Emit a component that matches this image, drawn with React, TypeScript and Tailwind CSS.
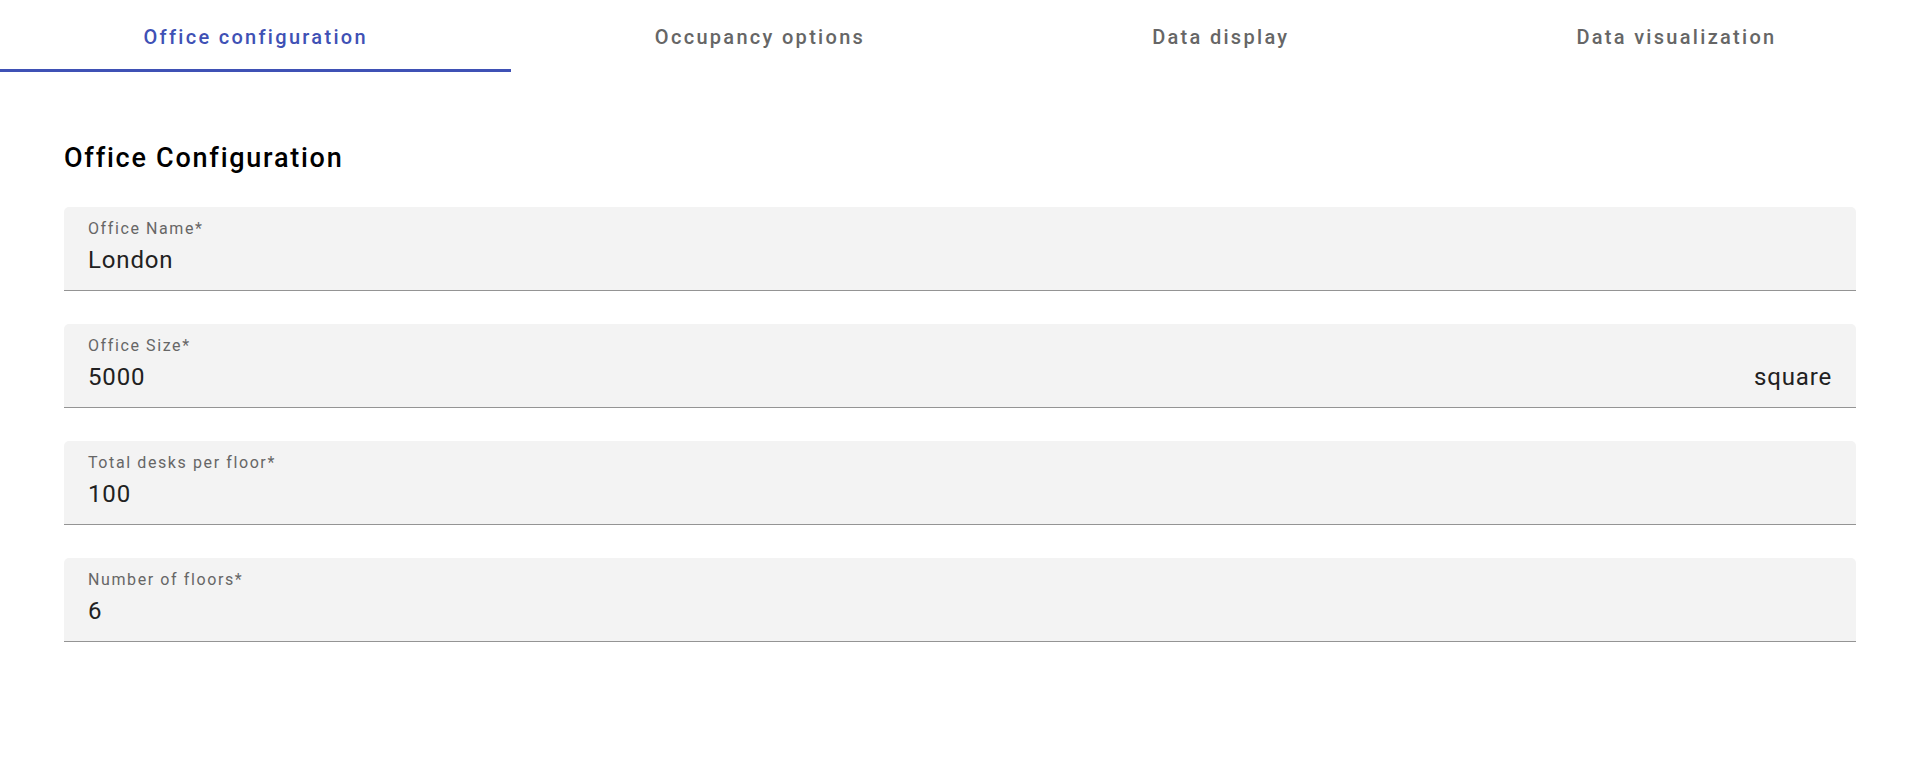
import React from "react";

// --- Data ---
const TABS = ["Office configuration", "Occupancy options", "Data display", "Data visualization"];

const FIELDS = [
  { label: "Office Name*", value: "London" },
  { label: "Office Size*", value: "5000", suffix: "square" },
  { label: "Total desks per floor*", value: "100" },
  { label: "Number of floors*", value: "6" },
];

const Field = ({ label, value, suffix }: { label: string; value: string; suffix?: string }) => (
  <div className="rounded-t-[5px] border-b border-[#949494] bg-[#f3f3f3] px-6 pt-3 pb-[16px]">
    <div className="text-[16px] leading-5 tracking-[0.1em] text-[#666666]">{label}</div>
    <div className="mt-[7px] flex items-center justify-between text-[24px] leading-7 tracking-[0.035em] text-[#212121]">
      <span>{value}</span>
      {suffix && <span>{suffix}</span>}
    </div>
  </div>
);

export default function App() {
  const active = 0;

  return (
    <div className="min-h-screen bg-white font-['Roboto',sans-serif]">
      {/* Tabs */}
      <div className="flex h-[72px]">
        {TABS.map((tab, i) => (
          <button
            key={tab}
            className={`relative flex flex-auto items-center justify-center px-4 pt-[2px] text-[20px] font-medium leading-6 tracking-[0.115em] ${
              i === active ? "text-[#3f51b5]" : "text-[#666666]"
            }`}
          >
            {tab}
            {i === active && <span className="absolute bottom-0 left-0 right-0 h-[3px] bg-[#3f51b5]" />}
          </button>
        ))}
      </div>

      {/* Form */}
      <div className="px-16 pt-[70px]">
        <h2 className="text-[27px] font-medium leading-8 tracking-[0.065em] text-black">Office Configuration</h2>
        <div className="mt-[33px] flex flex-col gap-[33px]">
          {FIELDS.map((f) => (
            <Field key={f.label} {...f} />
          ))}
        </div>
      </div>
    </div>
  );
}
